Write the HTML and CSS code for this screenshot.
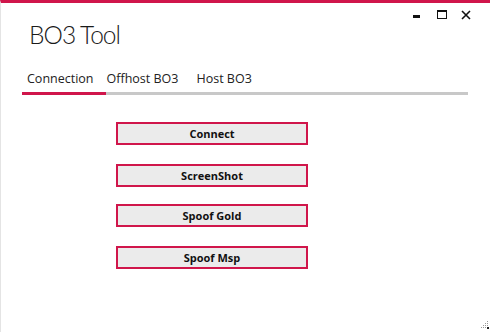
FILE: index.html
```html
<!DOCTYPE html>
<html lang="en">
<head>
    <meta charset="UTF-8">
    <meta name="viewport" content="width=device-width, initial-scale=1.0">
    <title>BO3 Tool</title>
    <link rel="stylesheet" href="styles.css">
</head>
<body>

    <div class="window">
        <div class="controls">
            <span class="ctl min"></span>
            <span class="ctl max"></span>
            <span class="ctl close">
                <svg width="10" height="10" viewBox="0 0 10 10"><path d="M1 1L9 9M9 1L1 9" stroke="#111" stroke-width="1.6"/></svg>
            </span>
        </div>

        <h1 class="title">BO3 Tool</h1>

        <div class="tabs">
            <div class="tab active">Connection</div>
            <div class="tab">Offhost BO3</div>
            <div class="tab">Host BO3</div>
        </div>

        <div class="actions">
            <button class="btn">Connect</button>
            <button class="btn">ScreenShot</button>
            <button class="btn tight">Spoof Gold</button>
            <button class="btn">Spoof Msp</button>
        </div>

        <svg class="grip" width="10" height="10" viewBox="0 0 10 10">
            <rect x="8" y="0" width="1" height="1" fill="#999"/>
            <rect x="6" y="2" width="1" height="1" fill="#999"/>
            <rect x="8" y="2" width="1" height="1" fill="#999"/>
            <rect x="4" y="4" width="1" height="1" fill="#999"/>
            <rect x="6" y="4" width="1" height="1" fill="#999"/>
            <rect x="8" y="4" width="1" height="1" fill="#999"/>
            <rect x="2" y="6" width="1" height="1" fill="#999"/>
            <rect x="4" y="6" width="1" height="1" fill="#999"/>
            <rect x="6" y="6" width="1" height="1" fill="#999"/>
            <rect x="8" y="6" width="2" height="2" fill="#222"/>
        </svg>
    </div>

</body>
</html>
```

FILE: styles.css
```css
body {
    margin: 0;
    font-family: 'Open Sans', 'Noto Sans', sans-serif;
    background-color: #ffffff;
    color: #111111;
}
.window {
    position: relative;
    height: 332px;
    box-sizing: border-box;
    border-top: 3px solid #d0164b;
    border-left: 1px solid #e4e4e4;
    background-color: #ffffff;
}
.controls {
    display: flex;
    justify-content: flex-end;
    align-items: flex-start;
    gap: 14px;
    padding: 7px 19px 0 0;
    height: 9px;
}
.ctl {
    display: block;
    width: 10px;
    height: 10px;
}
.min {
    width: 7px;
    height: 3px;
    margin-top: 5px;
    margin-right: 3px;
    background-color: #111111;
}
.max {
    box-sizing: border-box;
    width: 10px;
    height: 9px;
    border: 1px solid #111111;
    border-top-width: 2px;
}
.close svg {
    display: block;
}
.title {
    margin: 0 0 0 28px;
    font-family: 'Lato', 'Open Sans', sans-serif;
    font-size: 24.5px;
    font-weight: 300;
    letter-spacing: -1px;
    line-height: 32px;
    color: #1a1a1a;
}
.tabs {
    display: flex;
    margin: 18px 22px 0 21px;
    border-bottom: 3px solid #c8c8c8;
}
.tab {
    padding: 0 17px 3px 1px;
    margin-bottom: -3px;
    border-bottom: 3px solid transparent;
    font-size: 12.5px;
    line-height: 20px;
    color: #222222;
}
.tab.active {
    padding-left: 5px;
    padding-right: 12px;
    border-bottom-color: #d0164b;
}
.actions {
    display: flex;
    flex-direction: column;
    align-items: flex-start;
    gap: 19px;
    padding: 27px 0 0 115px;
}
.btn {
    width: 192px;
    height: 23px;
    padding: 0;
    border: 2px solid #d0164b;
    background-color: #ebebeb;
    font-family: 'Open Sans', 'Noto Sans', sans-serif;
    font-size: 11px;
    font-weight: bold;
    color: #111111;
    cursor: pointer;
}
.btn.tight {
    margin-top: -2px;
}
.grip {
    position: absolute;
    right: 1px;
    bottom: 1px;
}
```
